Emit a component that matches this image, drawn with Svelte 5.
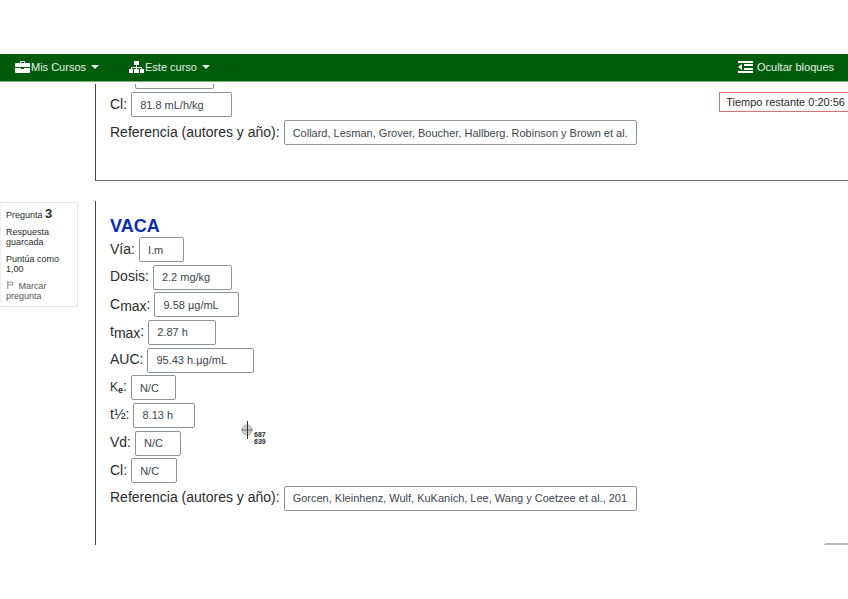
<script lang="ts">
  interface Field {
    id: string;
    label: string;
    sub?: string;
    small?: boolean;
    value: string;
    width: number;
  }

  let previous: Field[] = [
    { id: 'p-cl', label: 'Cl:', value: '81.8 mL/h/kg', width: 101 },
    {
      id: 'p-ref',
      label: 'Referencia (autores y año):',
      value: 'Collard, Lesman, Grover, Boucher, Hallberg. Robinson y Brown et al.',
      width: 353
    }
  ];

  let current: Field[] = [
    { id: 'via', label: 'Vía:', value: 'I.m', width: 45 },
    { id: 'dosis', label: 'Dosis:', value: '2.2 mg/kg', width: 79 },
    { id: 'cmax', label: 'C', sub: 'max', value: '9.58 µg/mL', width: 85 },
    { id: 'tmax', label: 't', sub: 'max', value: '2.87 h', width: 68 },
    { id: 'auc', label: 'AUC:', value: '95.43 h.µg/mL', width: 107 },
    { id: 'ke', label: 'K', sub: 'e', small: true, value: 'N/C', width: 45 },
    { id: 'thalf', label: 't½:', value: '8.13 h', width: 62 },
    { id: 'vd', label: 'Vd:', value: 'N/C', width: 46 },
    { id: 'cl', label: 'Cl:', value: 'N/C', width: 46 },
    {
      id: 'ref',
      label: 'Referencia (autores y año):',
      value: 'Gorcen, Kleinhenz, Wulf, KuKanich, Lee, Wang y Coetzee et al., 201',
      width: 353
    }
  ];
</script>

{#snippet row(field: Field)}
  <div class="row">
    <label for={field.id}>
      {#if field.sub}<span class:small={field.small}>{field.label}<span class="sub">{field.sub}</span></span>:{:else}{field.label}{/if}
    </label>
    <input id={field.id} type="text" bind:value={field.value} style="width: {field.width}px" />
  </div>
{/snippet}

<div class="screen">
  <nav class="navbar">
    <button type="button" class="menu">
      <svg width="15" height="12" viewBox="0 0 15 12" aria-hidden="true">
        <path fill="#fff" d="M5 2V1q0-1 1-1h3q1 0 1 1v1h4q1 0 1 1v3H0V3q0-1 1-1zm1 0h3V1H6zM0 7h6v1h3V7h6v4q0 1-1 1H1q-1 0-1-1z" />
      </svg>
      <span>Mis Cursos</span>
      <span class="caret"></span>
    </button>
    <button type="button" class="menu">
      <svg width="15" height="12" viewBox="0 0 15 12" aria-hidden="true">
        <path fill="#fff" d="M5 0h5v4H8v2h5v2h2v4h-4V8h1V7H8v1h2v4H5V8h2V7H3v1h1v4H0V8h2V6h5V4H5z" />
      </svg>
      <span>Este curso</span>
      <span class="caret"></span>
    </button>
    <button type="button" class="menu blocks">
      <svg width="15" height="12" viewBox="0 0 15 12" aria-hidden="true">
        <path fill="#fff" d="M0 0h15v2H0zM6 3h9v2H6zM6 7h9v2H6zM0 10h15v2H0zM4 3v6L0 6z" />
      </svg>
      <span>Ocultar bloques</span>
    </button>
  </nav>

  <main>
    <div class="timer">Tiempo restante 0:20:56</div>

    <section class="question previous">
      <div class="content">
        <input class="scrolled" type="text" aria-label="Vd" />
        {#each previous as field (field.id)}
          {@render row(field)}
        {/each}
      </div>
    </section>

    <section class="question">
      <aside class="info">
        <h3>Pregunta <b>3</b></h3>
        <p>Respuesta guarcada</p>
        <p>Puntúa como 1,00</p>
        <a href="#flag">
          <svg width="8" height="8" viewBox="0 0 8 9" aria-hidden="true">
            <path fill="none" stroke="#777" d="M1.500 0v9M2 1.500q2-1 3 0t2 0v3q-1 1-2 0t-3 0" />
          </svg>
          Marcar pregunta
        </a>
      </aside>
      <div class="content">
        <h2>VACA</h2>
        <div class="fields">
          {#each current as field (field.id)}
            {@render row(field)}
          {/each}
        </div>
      </div>
    </section>

    <div class="pointer">
      <svg width="14" height="18" viewBox="0 0 14 18" aria-hidden="true">
        <circle cx="7" cy="9" r="5" fill="#ccc" stroke="#aaa" />
        <path stroke="#777" d="M1 9h12" />
        <path stroke="#333" d="M7.500 0v18" />
      </svg>
      <span>687<br />639</span>
    </div>
    <div class="corner"></div>
  </main>
</div>

<style>
  :global(body) {
    margin: 0;
    background: #fff;
  }

  .screen {
    padding: 54px 0;
    font-family: "Liberation Sans", Arial, sans-serif;
    color: #2b2b2b;
  }

  .navbar {
    display: flex;
    align-items: center;
    height: 28px;
    padding: 0 14px 2px 15px;
    gap: 30px;
    background: #005b0b;
    border-bottom: 1px solid #7aa87d;
    box-sizing: border-box;
  }

  .menu {
    display: flex;
    align-items: center;
    gap: 1px;
    padding: 0;
    border: 0;
    background: none;
    color: #e4f0e4;
    font: 11px "Liberation Sans", Arial, sans-serif;
  }

  .blocks {
    margin-left: auto;
    gap: 4px;
  }

  .caret {
    margin-left: 4px;
    border: 4px solid transparent;
    border-top-color: #e4f0e4;
    border-bottom: 0;
  }

  main {
    position: relative;
    overflow: hidden;
    padding-top: 2px;
  }

  .timer {
    position: absolute;
    top: 10px;
    right: 0;
    padding: 0 3px 0 6px;
    border: 1px solid #e07078;
    border-right: 0;
    font-size: 11px;
    line-height: 18px;
  }

  .question {
    display: grid;
    grid-template-columns: 78px 1fr;
    column-gap: 17px;
    align-items: start;
  }

  .content {
    grid-column: 2;
    padding: 15px 0 34px 14px;
    border-left: 1px solid #444b4b;
  }

  /* scrolled under the navbar, only its end shows */
  .previous {
    margin-bottom: 20px;
  }

  .previous .content {
    display: flex;
    flex-direction: column;
    justify-content: flex-end;
    gap: 3px;
    height: 97px;
    padding: 0 0 0 14px;
    border-bottom: 1px solid #777;
    overflow: hidden;
    box-sizing: border-box;
  }

  .previous .content::after {
    content: "";
    flex: none;
    height: 32px;
  }

  .scrolled {
    flex: none;
    width: 79px;
    margin-left: 25px;
  }

  .info {
    padding: 4px 5px;
    border: 1px solid #e4e4e4;
    border-left-color: #f0f0f0;
    margin-top: 1px;
    box-sizing: border-box;
    font-size: 9px;
    line-height: 10px;
  }

  .info h3 {
    margin: 0 0 5px;
    font-size: 9px;
    font-weight: normal;
    line-height: 14px;
  }

  .info h3 b {
    font-size: 13px;
  }

  .info p {
    margin: 0 0 7px;
  }

  .info a {
    display: block;
    color: #555;
    text-decoration: none;
    margin-bottom: 1px;
  }

  .info svg {
    margin-right: 2px;
  }

  h2 {
    margin: 0;
    color: #0a2cb4;
    font-size: 18px;
    line-height: 21px;
  }

  .fields {
    display: flex;
    flex-direction: column;
    justify-content: space-between;
    min-height: 274px;
  }

  .row {
    display: flex;
    align-items: center;
    flex: none;
    gap: 4px;
  }

  label {
    font-size: 14px;
    line-height: 20px;
    white-space: nowrap;
    padding-bottom: 2px;
  }

  .sub {
    position: relative;
    top: 2px;
  }

  .small {
    font-size: 12px;
  }

  .small .sub {
    font-size: 9px;
    font-weight: bold;
  }

  input {
    height: 25px;
    max-width: 100%;
    padding: 0 8px;
    border: 1px solid #8f9296;
    border-radius: 2px;
    box-sizing: border-box;
    background: #fff;
    color: #40454a;
    font: 11px "Liberation Sans", Arial, sans-serif;
  }

  .pointer {
    position: absolute;
    top: 339px;
    left: 240px;
    display: flex;
    font-size: 7px;
    font-weight: bold;
    line-height: 7px;
  }

  .pointer span {
    margin-top: 10px;
  }

  .corner {
    position: absolute;
    right: 0;
    bottom: 0;
    width: 24px;
    height: 2px;
    background: #bbb;
    border-radius: 2px 0 0 0;
  }
</style>
